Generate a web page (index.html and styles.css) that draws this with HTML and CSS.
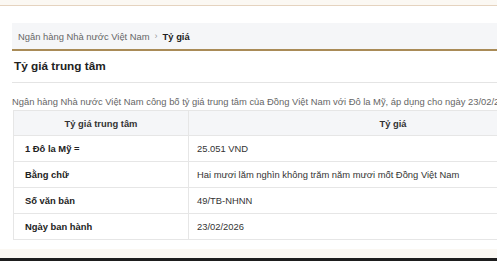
FILE: index.html
```html
<!DOCTYPE html>
<html lang="vi">
<head>
<meta charset="utf-8">
<link rel="stylesheet" href="styles.css">
</head>
<body>
<div class="page">
  <div class="topbar"></div>
  <div class="main">
    <div class="breadcrumb">
      <span class="crumb">Ngân hàng Nhà nước Việt Nam</span>
      <span class="sep">›</span>
      <span class="crumb-current">Tỷ giá</span>
    </div>
    <h1 class="title">Tỷ giá trung tâm</h1>
    <p class="desc">Ngân hàng Nhà nước Việt Nam công bố tỷ giá trung tâm của Đồng Việt Nam với Đô la Mỹ, áp dụng cho ngày 23/02/2026.</p>
    <table class="rates">
      <thead>
        <tr><th class="c1">Tỷ giá trung tâm</th><th class="c2">Tỷ giá</th></tr>
      </thead>
      <tbody>
        <tr><td class="label">1 Đô la Mỹ =</td><td>25.051 VND</td></tr>
        <tr><td class="label">Bằng chữ</td><td>Hai mươi lăm nghìn không trăm năm mươi mốt Đồng Việt Nam</td></tr>
        <tr><td class="label">Số văn bản</td><td>49/TB-NHNN</td></tr>
        <tr><td class="label">Ngày ban hành</td><td>23/02/2026</td></tr>
      </tbody>
    </table>
  </div>
  <div class="spacer"></div>
  <div class="footer-edge"></div>
  <div class="footer"></div>
</div>
</body>
</html>
```

FILE: styles.css
```css
html, body {
  margin: 0;
  padding: 0;
  overflow: hidden;
  background: #ffffff;
}
body {
  width: 497px;
  height: 261px;
  font-family: "Liberation Sans", Arial, sans-serif;
  color: #333;
}
.page {
  width: 680px;
  height: 261px;
  display: flex;
  flex-direction: column;
}
.topbar {
  height: 5px;
  background: #fbf8f3;
  border-bottom: 1px solid #e5d3bf;
  flex: none;
}
.main {
  padding: 17px 0 0 12px;
  flex: none;
}
.breadcrumb {
  height: 26px;
  background: #f5f6f8;
  border-bottom: 2px solid #a98b57;
  display: flex;
  align-items: center;
  padding-left: 6px;
  font-size: 9.4px;
  color: #666;
  gap: 5px;
}
.sep {
  color: #999;
  font-size: 9px;
}
.crumb-current {
  font-weight: bold;
  color: #222;
}
.title {
  margin: 0;
  height: 31px;
  line-height: 31px;
  padding-left: 2px;
  font-size: 11.8px;
  font-weight: bold;
  color: #222;
  border-bottom: 1px solid #e4e4e4;
}
.desc {
  margin: 0;
  height: 27px;
  line-height: 12px;
  padding-top: 13px;
  box-sizing: border-box;
  font-size: 9.4px;
  color: #666;
  white-space: nowrap;
}
.rates {
  margin-left: 1px;
  width: 585px;
  border-collapse: collapse;
  font-size: 9.4px;
  color: #333;
}
.rates th, .rates td {
  border: 1px solid #e6e6e6;
  height: 25px;
  padding: 0 0 0 11px;
  box-sizing: border-box;
}
.rates th {
  background: #f5f6f8;
  font-weight: bold;
  text-align: center;
  color: #333;
  height: 25px;
  padding: 0;
}
.rates tbody td {
  height: 26px;
}
.rates .c1 {
  width: 175px;
}
.rates td.label {
  font-weight: bold;
  color: #222;
}
.rates td:nth-child(2) {
  padding-left: 8px;
}
.spacer {
  flex: 1;
}
.footer-edge {
  height: 9px;
  background: #fbf8f3;
  flex: none;
}
.footer {
  height: 3px;
  background: #1e1e1e;
  flex: none;
}
```
